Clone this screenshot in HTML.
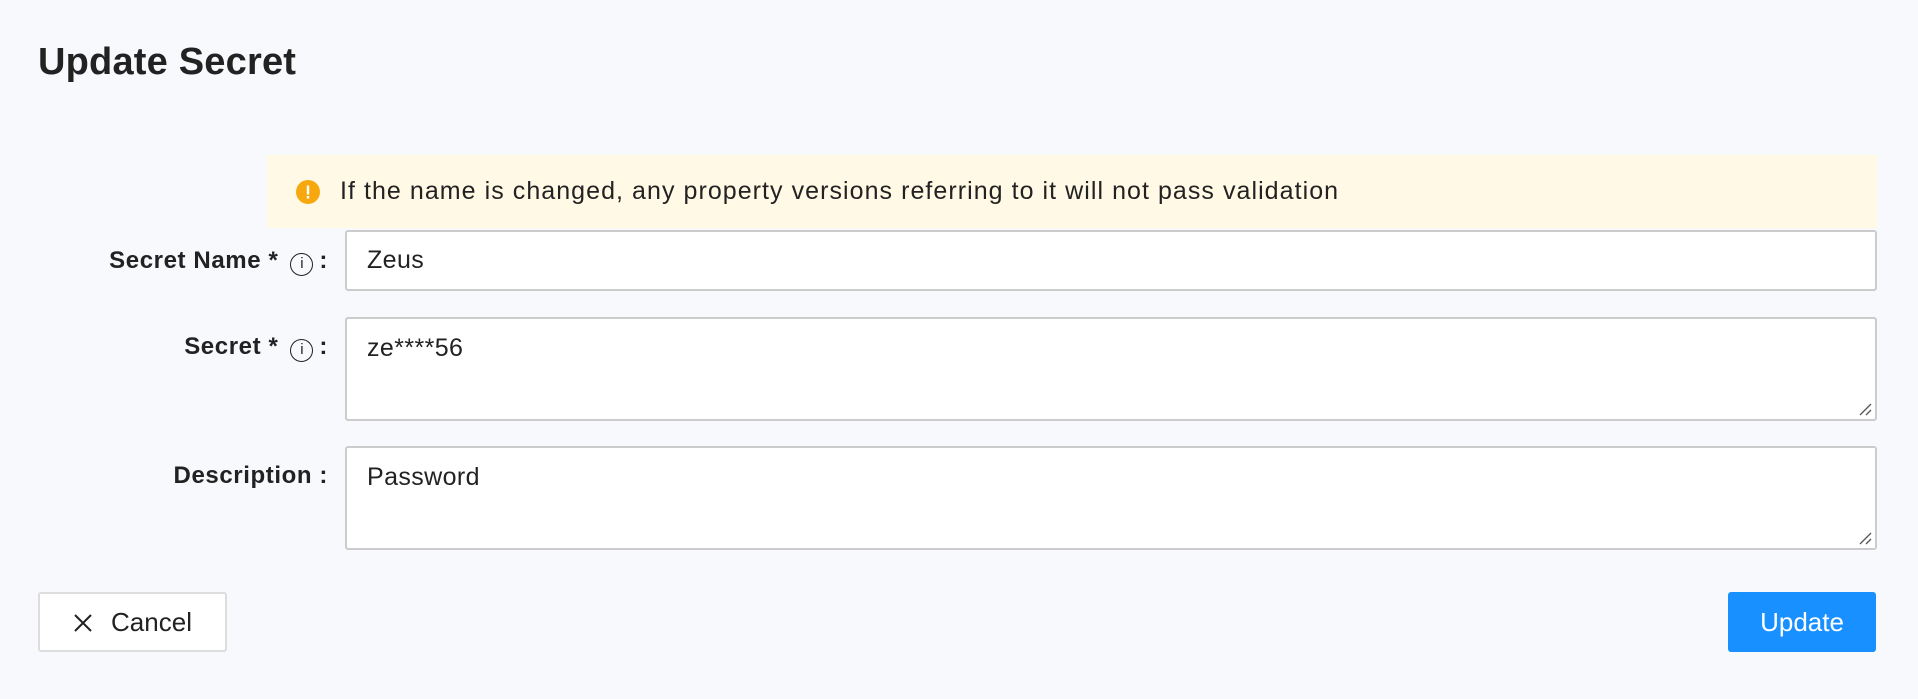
<!DOCTYPE html>
<html><head><style>
body{margin:0;width:1918px;height:699px;background:#f8f9fd;font-family:"Liberation Sans",sans-serif;color:#222;position:relative;overflow:hidden}
.a{position:absolute}
h1{position:absolute;left:38px;top:41px;margin:0;font-size:38px;font-weight:bold;color:#222;letter-spacing:0.2px}
.alert{left:267px;top:155px;width:1610px;height:73px;background:#fff9e6}
.box{background:#fff;border:2px solid #ccc;border-radius:3px;box-sizing:border-box;left:345px;width:1532px;font-size:25px;padding-left:20px;letter-spacing:0.4px}
.lbl{font-weight:bold;font-size:24px;text-align:right;right:1590px;white-space:nowrap;letter-spacing:0.6px}
.info{display:inline-block;width:23px;height:23px;border:1.8px solid #222;border-radius:50%;box-sizing:border-box;font-size:15px;line-height:20px;text-align:center;font-weight:normal;vertical-align:0px;margin:0 6px 0 12px;letter-spacing:0}
.grip{position:absolute;right:3px;bottom:3px}
.btn{top:592px;height:60px;border-radius:3px;box-sizing:border-box;font-size:26px;line-height:56px;text-align:center}
</style></head><body>
<h1>Update Secret</h1>
<div class="a alert"></div>
<svg class="a" style="left:296px;top:180px" width="24" height="24"><circle cx="12" cy="12" r="12" fill="#f8a80f"/><rect x="10.8" y="5.5" width="2.4" height="9" fill="#fff"/><rect x="10.8" y="16" width="2.4" height="2.6" fill="#fff"/></svg>
<div class="a" style="left:340px;top:177px;font-size:25px;color:#222;letter-spacing:1.05px">If the name is changed, any property versions referring to it will not pass validation</div>

<div class="a lbl" style="top:247px">Secret Name *<span class="info">i</span>:</div>
<div class="a box" style="top:230px;height:61px;line-height:57px">Zeus</div>

<div class="a lbl" style="top:333px">Secret *<span class="info">i</span>:</div>
<div class="a box" style="top:317px;height:104px;padding-top:15px">ze****56<svg class="grip" width="14" height="14"><path d="M2 13L13 2M8 13L13 8" stroke="#555" stroke-width="1.3"/></svg></div>

<div class="a lbl" style="top:462px">Description :</div>
<div class="a box" style="top:446px;height:104px;padding-top:15px">Password<svg class="grip" width="14" height="14"><path d="M2 13L13 2M8 13L13 8" stroke="#555" stroke-width="1.3"/></svg></div>

<div class="a btn" style="left:38px;width:189px;background:#fff;border:2px solid #ddd"><svg width="20" height="20" style="vertical-align:-2px;margin-right:18px"><path d="M2 2L18 18M18 2L2 18" stroke="#222" stroke-width="2"/></svg>Cancel</div>
<div class="a btn" style="left:1728px;width:148px;background:#1890ff;color:#fff;line-height:60px">Update</div>
</body></html>
